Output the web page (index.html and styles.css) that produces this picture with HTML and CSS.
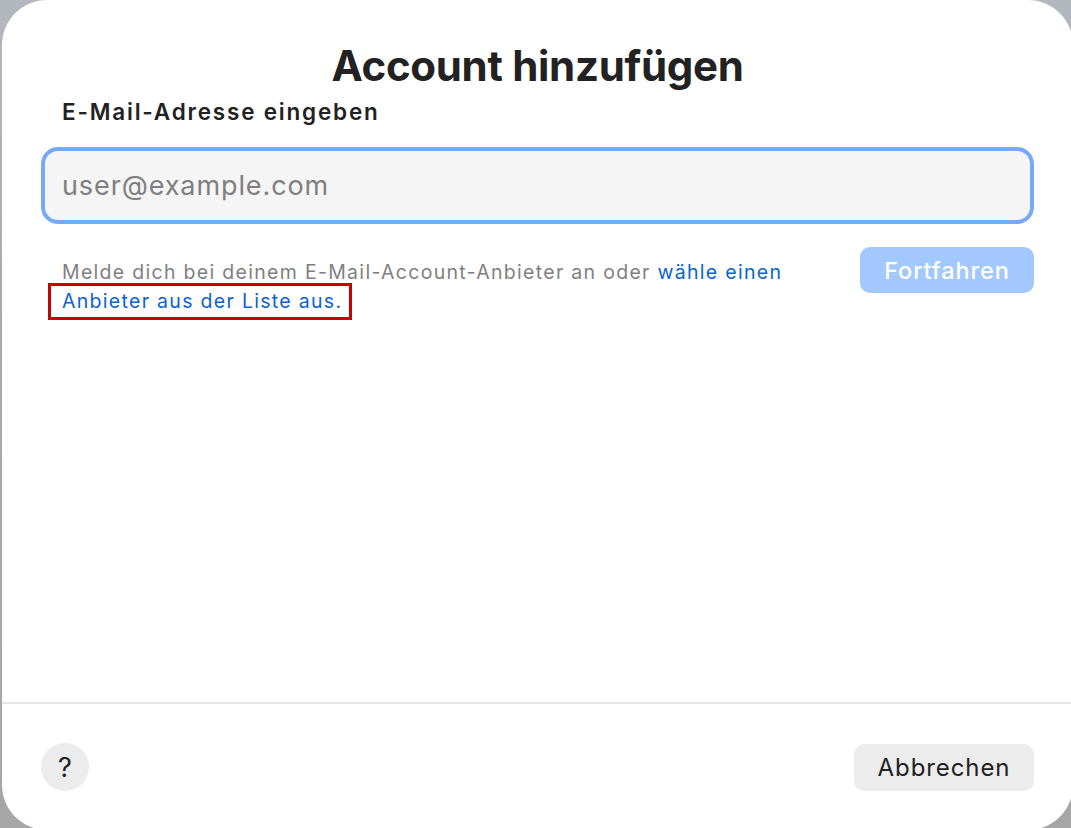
FILE: index.html
```html
<!DOCTYPE html>
<html lang="de">
<head>
<meta charset="utf-8">
<title>Account hinzufügen</title>
<link rel="stylesheet" href="styles.css">
</head>
<body>
<div class="window">
  <div class="content">
    <h1 class="title">Account hinzufügen</h1>
    <div class="label">E-Mail-Adresse eingeben</div>
    <div class="field"><input class="input" type="text" placeholder="user@example.com"></div>
    <div class="row">
      <p class="hint">Melde dich bei deinem E-Mail-Account-Anbieter an oder <a class="link" href="#">wähle einen</a><br><a class="link marked" href="#">Anbieter aus der Liste aus.</a></p>
      <button class="btn-primary" type="button">Fortfahren</button>
    </div>
  </div>
  <div class="footer">
    <button class="help" type="button">?</button>
    <button class="btn-secondary" type="button">Abbrechen</button>
  </div>
</div>
</body>
</html>
```
FILE: styles.css
```css
html, body {
  margin: 0;
  padding: 0;
  height: 100%;
}
body {
  background: linear-gradient(180deg, #b3b8bf 0%, #a9a9a9 40%, #a6a6a6 100%);
  font-family: Inter, "Noto Sans", sans-serif;
  overflow: hidden;
  position: relative;
}
.window {
  position: absolute;
  left: 2px;
  top: 0;
  width: 1071px;
  height: 830px;
  background: #ffffff;
  border-radius: 45px;
  display: flex;
  flex-direction: column;
}
.content {
  flex: 1;
  padding: 0 39px;
  display: flex;
  flex-direction: column;
}
.title {
  margin: 40px 0 0;
  text-align: center;
  font-size: 42px;
  font-weight: 700;
  color: #222222;
  line-height: 52px;
  letter-spacing: -0.3px;
}
.label {
  margin: 6px 0 0 21px;
  font-size: 22.5px;
  font-weight: 600;
  color: #222222;
  line-height: 28px;
  letter-spacing: 1.8px;
}
.field {
  margin-top: 21px;
}
.input {
  box-sizing: border-box;
  width: 100%;
  height: 77px;
  border: 4px solid #76aaf7;
  border-radius: 17px;
  background: #f5f5f5;
  padding: 0 17px;
  font-family: Inter, "Noto Sans", sans-serif;
  font-size: 27px;
  letter-spacing: 0.9px;
  color: #222;
  outline: none;
}
.input::placeholder {
  color: #7f7f7f;
}
.row {
  display: flex;
  justify-content: space-between;
  align-items: flex-start;
  margin-top: 23px;
}
.hint {
  margin: 11px 0 0 21px;
  font-size: 19.5px;
  line-height: 29px;
  letter-spacing: 1.3px;
  color: #7f7f7f;
  max-width: 760px;
}
.link {
  color: #0a63d1;
  text-decoration: none;
}
.marked {
  outline: 3px solid #cc0000;
  padding: 3px 7px 4px 11px;
  margin-left: -11px;
}
.btn-primary {
  width: 174px;
  height: 46px;
  margin-top: 0;
  border: none;
  border-radius: 10px;
  background: #a3c8fd;
  color: #ffffff;
  font-family: Inter, "Noto Sans", sans-serif;
  font-size: 23.5px;
  font-weight: 500;
  letter-spacing: 0.9px;
  padding: 0;
}
.footer {
  height: 128px;
  border-top: 2px solid #e6e6e6;
  box-sizing: border-box;
  display: flex;
  justify-content: space-between;
  align-items: center;
  padding: 0 39px 0 39px;
}
.help {
  width: 48px;
  height: 48px;
  border: none;
  border-radius: 50%;
  background: #ececec;
  color: #222222;
  font-family: Inter, "Noto Sans", sans-serif;
  font-size: 27px;
  font-weight: 400;
  padding: 0;
}
.btn-secondary {
  width: 180px;
  height: 47px;
  border: none;
  border-radius: 10px;
  background: #ececec;
  color: #222222;
  font-family: Inter, "Noto Sans", sans-serif;
  font-size: 24px;
  font-weight: 400;
  letter-spacing: 0.9px;
  padding: 0;
}
```
